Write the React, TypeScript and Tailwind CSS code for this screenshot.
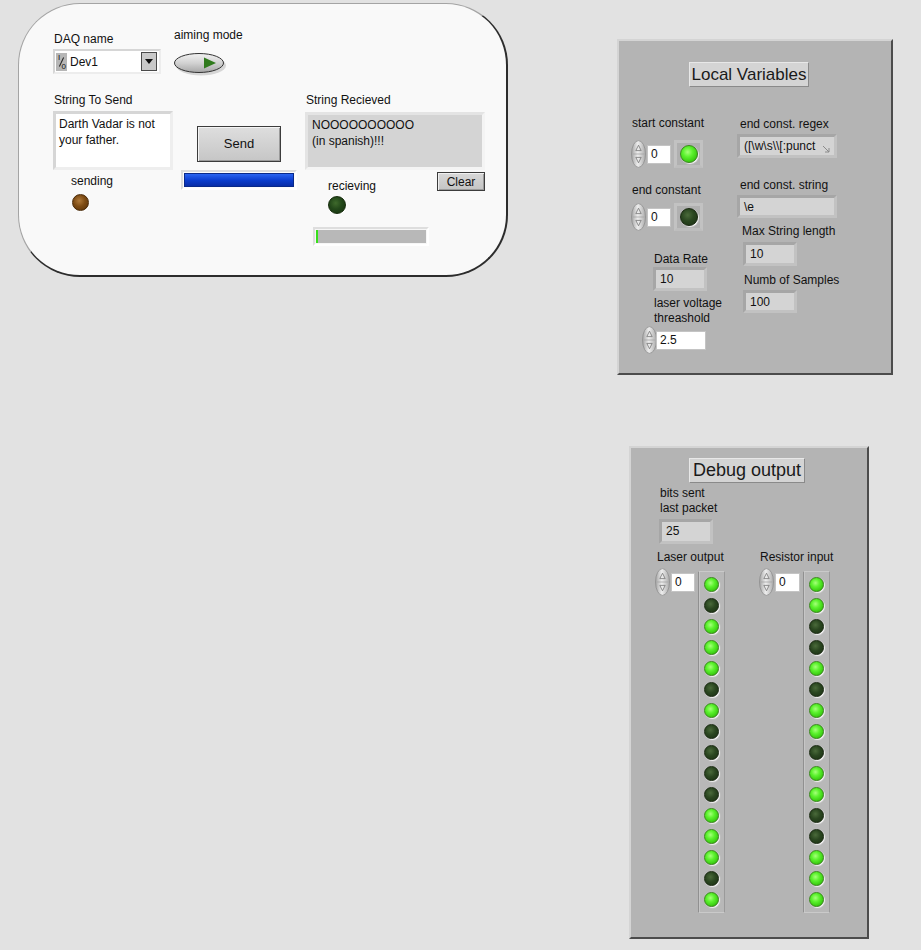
import React from "react";

const FONT = "font-['Liberation_Sans',Arial,sans-serif]";

function Label({ children, className = "" }: { children: React.ReactNode; className?: string }) {
  return <div className={`text-[12px] leading-[14px] text-[#111] whitespace-nowrap ${className}`}>{children}</div>;
}

function Spinner() {
  return (
    <svg width="15" height="28" viewBox="0 0 15 28" className="shrink-0">
      <defs>
        <linearGradient id="spg" x1="0" x2="1" y1="0" y2="0">
          <stop offset="0" stopColor="#a4a4a4" />
          <stop offset="0.45" stopColor="#eeeeee" />
          <stop offset="1" stopColor="#ababab" />
        </linearGradient>
      </defs>
      <ellipse cx="7.5" cy="14" rx="7" ry="13.4" fill="url(#spg)" stroke="#8e8e8e" strokeWidth="0.8" />
      <line x1="1.5" y1="14" x2="13.5" y2="14" stroke="#a5a5a5" strokeWidth="0.8" />
      <path d="M7.5 5.2 L10.2 10.6 L4.8 10.6 Z" fill="none" stroke="#777" strokeWidth="0.8" />
      <path d="M7.5 22.8 L10.2 17.4 L4.8 17.4 Z" fill="none" stroke="#777" strokeWidth="0.8" />
    </svg>
  );
}

type LedKind = "on" | "off" | "brown" | "offDeep";
function Led({ kind, size = 16 }: { kind: LedKind; size?: number }) {
  const bg =
    kind === "on"
      ? "bg-[radial-gradient(circle_at_42%_38%,#a6ff7a_0%,#5cf22e_35%,#37c80f_75%,#2a9c0a_100%)] border-[#3a8a1c]"
      : kind === "brown"
      ? "bg-[radial-gradient(circle_at_42%_38%,#b07a3a_0%,#7e4c14_45%,#55300a_100%)] border-[#4a2a08]"
      : kind === "offDeep"
      ? "bg-[radial-gradient(circle_at_42%_38%,#3f6a2c_0%,#23481a_45%,#15300c_100%)] border-[#142a0a]"
      : "bg-[radial-gradient(circle_at_42%_38%,#4a6a3a_0%,#2a4620_45%,#1a2f12_100%)] border-[#1a2a12]";
  return (
    <div
      className={`rounded-full border shrink-0 shadow-[1px_1px_1px_rgba(255,255,255,0.85)] ${bg}`}
      style={{ width: size, height: size }}
    />
  );
}

function NumInput({ value, w }: { value: string; w: number }) {
  return (
    <div
      className="h-[19px] bg-white border border-[#c4c4c4] text-[12px] leading-[17px] text-[#111] pl-[3px] shrink-0"
      style={{ width: w }}
    >
      {value}
    </div>
  );
}

function Indicator({ children, w, h, className = "" }: { children: React.ReactNode; w: number; h: number; className?: string }) {
  return (
    <div
      className={`bg-[#d4d4d4] border-[3px] border-t-[#a6a6a6] border-l-[#a6a6a6] border-b-[#c2c2c2] border-r-[#c2c2c2] text-[12px] leading-[16px] text-[#111] pl-[4px] pt-[1px] overflow-hidden whitespace-nowrap ${className}`}
      style={{ width: w, height: h }}
    >
      {children}
    </div>
  );
}

function LedBox({ kind }: { kind: LedKind }) {
  return (
    <div className="w-[29px] h-[28px] bg-[#b0b0b0] border-[3px] border-[#c2c2c2] border-b-[#bdbdbd] flex items-center justify-center shrink-0">
      <Led kind={kind} size={18} />
    </div>
  );
}

function Title({ children, w, size }: { children: React.ReactNode; w: number; size: string }) {
  return (
    <div
      className={`h-[25px] bg-[#d4d4d4] border border-t-[#e8e8e8] border-l-[#e8e8e8] border-b-[#8a8a8a] border-r-[#8a8a8a] leading-[23px] text-[#1a1a1a] text-center whitespace-nowrap ${size}`}
      style={{ width: w }}
    >
      {children}
    </div>
  );
}

const LASER = "GDGGGDGDDDDGGGDG";
const RESIST = "GGDDGDGGDGGDDGGG";

function LedColumn({ pattern }: { pattern: string }) {
  return (
    <div className="w-[27px] bg-[#b8b8b8] border border-t-[#cacaca] border-l-[#909090] border-r-[#9a9a9a] border-b-[#cacaca] shadow-[inset_1px_0_0_#c6c6c6] flex flex-col items-center gap-[6px] pt-[5px] pb-[5px] shrink-0">
      {pattern.split("").map((c, i) => (
        <Led key={i} kind={c === "G" ? "on" : "off"} size={15} />
      ))}
    </div>
  );
}

function LeftBox() {
  return (
    <div className="w-[490px] h-[274px] rounded-[62px] bg-[#f9f9f9] border-t border-l border-t-[#a4a4a4] border-l-[#a4a4a4] border-r-2 border-b-2 border-r-[#2c2c2c] border-b-[#2c2c2c] flex">
      {/* Column A */}
      <div className="ml-[34px] w-[120px] flex flex-col">
        <Label className="mt-[28px] ml-[1px]">DAQ name</Label>
        <div className="mt-[3px] w-[108px] h-[25px] bg-white border-2 border-t-[#d6d6d6] border-l-[#d6d6d6] border-b-[#ededed] border-r-[#ededed] flex items-center">
          <div className="w-[11px] h-[18px] bg-[#b6b6b6] ml-[1px] shrink-0 text-[#111] flex flex-col items-center justify-between py-[1px] relative">
            <span className="text-[8px] leading-[7px] self-start ml-[2px]">I</span>
            <div className="absolute left-[5px] top-[4px] w-px h-[10px] bg-[#222] rotate-[25deg]" />
            <span className="text-[8px] leading-[7px] self-end mr-[1px]">0</span>
          </div>
          <span className="ml-[3px] text-[12px] leading-[14px] text-[#111] flex-1">Dev1</span>
          <div className="w-[16px] h-[19px] bg-[#c9c9c9] border border-[#4a4a4a] flex items-center justify-center mr-[2px]">
            <svg width="8" height="5" viewBox="0 0 8 5">
              <path d="M0 0 L8 0 L4 5 Z" fill="#111" />
            </svg>
          </div>
        </div>
        <Label className="mt-[19px] ml-[1px]">String To Send</Label>
        <div className="mt-[4px] w-[120px] h-[59px] bg-white border-[3px] border-t-[#d6d6d6] border-l-[#d6d6d6] border-b-[#eeeeee] border-r-[#eeeeee] text-[12px] leading-[16px] text-[#111] pl-[3px] pt-[2px]">
          Darth Vadar is not
          <br />
          your father.
        </div>
        <Label className="mt-[4px] ml-[18px]">sending</Label>
        <div className="mt-[6px] ml-[19px]">
          <Led kind="brown" size={17} />
        </div>
      </div>
      {/* Column B */}
      <div className="w-[132px] flex flex-col">
        <Label className="mt-[24px] ml-[1px]">aiming mode</Label>
        <div className="mt-[10px]">
          <svg width="56" height="26" viewBox="0 0 56 26">
            <defs>
              <linearGradient id="swg" x1="0" x2="0" y1="0" y2="1">
                <stop offset="0" stopColor="#f2f2f2" />
                <stop offset="0.5" stopColor="#d2d2d2" />
                <stop offset="1" stopColor="#a6a6a6" />
              </linearGradient>
            </defs>
            <ellipse cx="28" cy="13.5" rx="25" ry="10" fill="#c8c8c8" opacity="0.7" />
            <ellipse cx="26" cy="11" rx="24.5" ry="9.5" fill="url(#swg)" stroke="#333" strokeWidth="1" />
            <path d="M31 5.5 L43 11 L31 16.5 Z" fill="#2f7a1c" />
          </svg>
        </div>
        <div className="mt-[48px] ml-[24px] w-[84px] h-[36px] border border-[#3c3c3c] bg-[linear-gradient(#dedede,#c6c6c6)] shadow-[inset_1px_1px_0_#f4f4f4,inset_-1px_-1px_0_#9a9a9a] flex items-center justify-center text-[13px] text-[#111]">
          Send
        </div>
        <div className="mt-[8px] ml-[8px] w-[116px] h-[20px] bg-[#fcfcfc] border-2 border-t-[#dcdcdc] border-l-[#dcdcdc] border-b-white border-r-white p-[1px]">
          <div className="w-full h-full bg-[linear-gradient(#2a64f0,#0d3fd0_50%,#0a2ea8)] border border-[#0a2a8a]" />
        </div>
      </div>
      {/* Column C */}
      <div className="w-[180px] flex flex-col">
        <Label className="mt-[89px] ml-[1px]">String Recieved</Label>
        <div className="mt-[5px] w-[180px] h-[58px] bg-[#d4d4d4] border-[3px] border-t-[#e4e4e4] border-l-[#e4e4e4] border-b-[#f4f4f4] border-r-[#f4f4f4] text-[12px] leading-[16px] text-[#111] pl-[4px] pt-[2px]">
          NOOOOOOOOOO
          <br />
          (in spanish)!!!
        </div>
        <div className="flex justify-between items-start">
          <div className="ml-[23px] flex flex-col">
            <Label className="mt-[9px]">recieving</Label>
            <div className="mt-[3px]">
              <Led kind="offDeep" size={18} />
            </div>
          </div>
          <div className="mt-[2px] w-[48px] h-[19px] border border-[#3c3c3c] bg-[linear-gradient(#d8d8d8,#c4c4c4)] shadow-[inset_1px_1px_0_#f0f0f0,inset_-1px_-1px_0_#9a9a9a] flex items-center justify-center text-[12px] text-[#111]">
            Clear
          </div>
        </div>
        <div className="mt-[13px] ml-[8px] w-[116px] h-[19px] bg-[#f6f6f6] border-2 border-t-[#dedede] border-l-[#dedede] border-b-white border-r-white p-[1px]">
          <div className="w-full h-full bg-[#b8b8b8] border-l-2 border-[#36e01a]" />
        </div>
      </div>
    </div>
  );
}

function LocalPanel() {
  return (
    <div className="w-[276px] h-[336px] bg-[#b4b4b4] border-2 border-t-[#d4d4d4] border-l-[#d4d4d4] border-r-[#4c4c4c] border-b-[#4c4c4c] flex flex-col">
      <div className="ml-[70px] mt-[21px]">
        <Title w={120} size="text-[17px]">Local Variables</Title>
      </div>
      <div className="flex">
        <div className="ml-[12px] w-[106px] flex flex-col">
          <Label className="mt-[29px] ml-[1px]">start constant</Label>
          <div className="mt-[10px] flex items-center">
            <Spinner />
            <div className="ml-[1px]"><NumInput value="0" w={24} /></div>
            <div className="ml-[3px]"><LedBox kind="on" /></div>
          </div>
          <Label className="mt-[15px] ml-[1px]">end constant</Label>
          <div className="mt-[6px] flex items-center">
            <Spinner />
            <div className="ml-[1px]"><NumInput value="0" w={24} /></div>
            <div className="ml-[3px]"><LedBox kind="off" /></div>
          </div>
          <Label className="mt-[21px] ml-[23px]">Data Rate</Label>
          <Indicator w={54} h={24} className="mt-[1px] ml-[22px]">10</Indicator>
          <div className="mt-[5px] ml-[23px] text-[12px] leading-[15px] text-[#111] whitespace-nowrap">
            laser voltage
            <br />
            threashold
          </div>
          <div className="ml-[11px] flex items-center">
            <Spinner />
            <div className="ml-[-1px]"><NumInput value="2.5" w={50} /></div>
          </div>
        </div>
        <div className="flex flex-col">
          <Label className="mt-[30px] ml-[3px]">end const. regex</Label>
          <div className="mt-[3px] relative">
            <Indicator w={100} h={24}>([\w\s\\[:punct</Indicator>
            <svg className="absolute left-[85px] top-[11px]" width="9" height="8" viewBox="0 0 9 8">
              <path d="M1 1 L7 7 M7 3 L7 7 L3 7" fill="none" stroke="#8a8a8a" strokeWidth="1" />
            </svg>
          </div>
          <Label className="mt-[20px] ml-[3px]">end const. string</Label>
          <Indicator w={100} h={23} className="mt-[3px]">\e</Indicator>
          <Label className="mt-[6px] ml-[5px]">Max String length</Label>
          <Indicator w={54} h={24} className="mt-[4px] ml-[6px]">10</Indicator>
          <Label className="mt-[7px] ml-[7px]">Numb of Samples</Label>
          <Indicator w={54} h={23} className="mt-[3px] ml-[6px]">100</Indicator>
        </div>
      </div>
    </div>
  );
}

function DebugPanel() {
  return (
    <div className="w-[240px] h-[493px] bg-[#b4b4b4] border-2 border-t-[#d4d4d4] border-l-[#d4d4d4] border-r-[#4c4c4c] border-b-[#4c4c4c] flex flex-col">
      <div className="ml-[58px] mt-[10px]">
        <Title w={116} size="text-[18px]">Debug output</Title>
      </div>
      <div className="mt-[3px] ml-[29px] text-[12px] leading-[15px] text-[#111] whitespace-nowrap">
        bits sent
        <br />
        last packet
      </div>
      <Indicator w={54} h={25} className="mt-[3px] ml-[28px]">25</Indicator>
      <div className="mt-[6px] ml-[24px] flex">
        <div className="flex flex-col">
          <Label className="ml-[2px]">Laser output</Label>
          <div className="mt-[4px] flex items-start">
            <Spinner />
            <div className="ml-[1px] mt-[5px]"><NumInput value="0" w={24} /></div>
            <div className="ml-[3px] mt-[3px]"><LedColumn pattern={LASER} /></div>
          </div>
        </div>
        <div className="ml-[34px] flex flex-col">
          <Label className="ml-[1px]">Resistor input</Label>
          <div className="mt-[4px] flex items-start">
            <Spinner />
            <div className="ml-[1px] mt-[5px]"><NumInput value="0" w={25} /></div>
            <div className="ml-[3px] mt-[3px]"><LedColumn pattern={RESIST} /></div>
          </div>
        </div>
      </div>
    </div>
  );
}

export default function App() {
  return (
    <div className={`${FONT} w-[921px] h-[950px] bg-[#e2e2e2] flex overflow-hidden`}>
      <div className="ml-[18px] mt-[3px]">
        <LeftBox />
      </div>
      <div className="ml-[109px] mt-[39px] flex flex-col">
        <LocalPanel />
        <div className="mt-[71px] ml-[12px]">
          <DebugPanel />
        </div>
      </div>
    </div>
  );
}
